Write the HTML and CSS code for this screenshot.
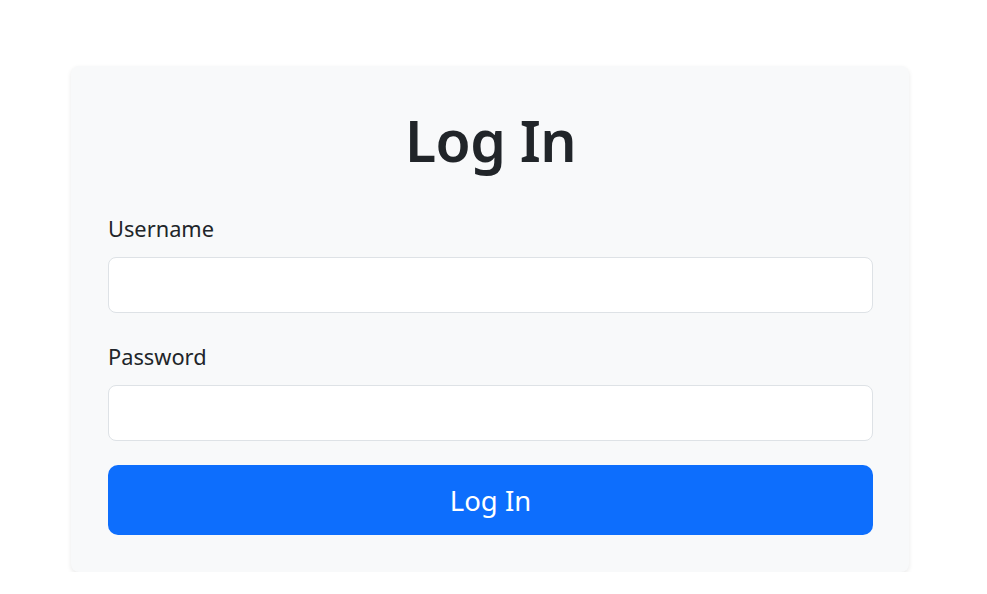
FILE: index.html
```html
<!DOCTYPE html>
<html lang="en">
<head>
<meta charset="utf-8">
<title>Log In</title>
<link rel="stylesheet" href="styles.css">
</head>
<body>
<main class="page">
  <section class="card">
    <h1 class="title">Log In</h1>
    <form class="form">
      <div class="field">
        <label class="label" for="username">Username</label>
        <input class="input" id="username" type="text">
      </div>
      <div class="field">
        <label class="label" for="password">Password</label>
        <input class="input" id="password" type="password">
      </div>
      <button class="btn" type="button">Log In</button>
    </form>
  </section>
</main>
</body>
</html>
```

FILE: styles.css
```css
* { box-sizing: border-box; }
html, body { margin: 0; padding: 0; background: #fff; }
body {
  font-family: "Noto Sans", "Open Sans", "Liberation Sans", sans-serif;
  color: #212529;
}
.page {
  padding: 66px 0 0 71px;
}
.card {
  width: 838px;
  height: 506px;
  background: #f8f9fa;
  border-radius: 8px;
  box-shadow: 0 2px 5px rgba(0, 0, 0, 0.09);
  padding: 39px 36px 37px 37px;
  display: flex;
  flex-direction: column;
}
.title {
  margin: 0 0 38px;
  text-align: center;
  font-size: 57px;
  font-weight: 600;
  line-height: 70px;
  letter-spacing: -0.5px;
}
.form {
  display: flex;
  flex-direction: column;
}
.field {
  display: flex;
  flex-direction: column;
  margin-bottom: 28px;
}
.field:last-of-type {
  margin-bottom: 24px;
}
.label {
  font-size: 21.8px;
  line-height: 32px;
  margin-bottom: 12px;
}
.input {
  height: 56px;
  border: 1px solid #dee2e6;
  border-radius: 8px;
  background: #fff;
  font: inherit;
  font-size: 20px;
  padding: 0 16px;
  outline: none;
}
.btn {
  height: 70px;
  border: none;
  border-radius: 10px;
  background: #0d6efd;
  color: #fff;
  font-family: inherit;
  font-size: 27.5px;
  cursor: pointer;
}
```
